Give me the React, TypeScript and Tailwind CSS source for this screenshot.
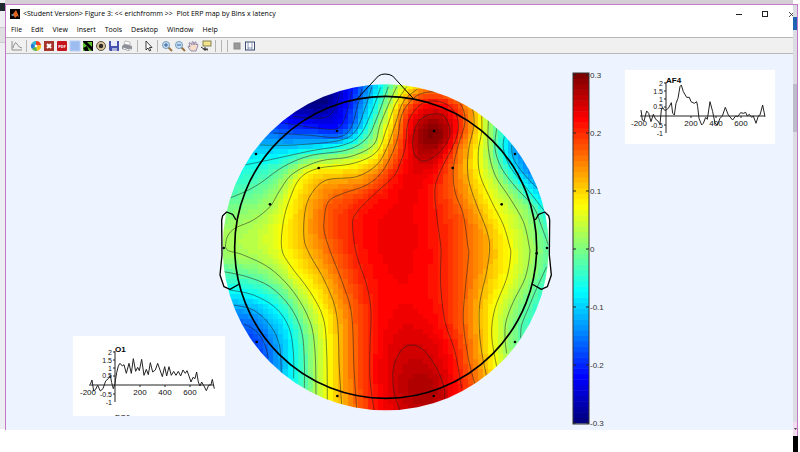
import React from 'react';

type Point = [number, number];

interface Contour {
    level: number;
    points: Point[];
}

// Head map coordinates: three units per screen pixel
const CENTER_X = 497;
const CENTER_Y = 532;
const HEAD_RADIUS = 453;
const MAP_RADIUS = 489;
const CELL = 15;

const contours: Contour[] = [
    { level: 0.25, points: [[630, 133], [665, 133], [685, 160], [688, 200], [660, 245], [615, 273], [585, 255], [578, 210], [595, 155], [630, 133]] },
    { level: 0.245, points: [[540, 1020], [522, 965], [520, 895], [545, 840], [575, 825], [610, 840], [650, 895], [673, 955], [673, 987]] },
    { level: 0.205, points: [[462, 1020], [450, 925], [450, 825], [453, 725], [440, 645], [410, 555], [398, 475], [405, 435], [450, 385], [510, 330], [530, 305], [555, 235], [565, 155], [600, 105], [645, 93], [690, 110], [715, 155], [705, 215], [665, 295], [645, 355], [650, 435], [662, 525], [663, 555], [662, 645], [675, 755], [705, 845], [725, 955]] },
    { level: 0.162, points: [[410, 1015], [402, 895], [395, 735], [370, 645], [335, 555], [315, 495], [312, 455], [325, 395], [370, 370], [440, 345], [490, 300], [530, 215], [545, 135], [580, 85], [620, 67], [670, 70], [720, 100], [735, 155], [715, 225], [700, 295], [705, 365], [730, 435], [743, 525], [746, 555], [735, 665], [730, 755], [745, 865], [764, 940]] },
    { level: 0.116, points: [[365, 1005], [358, 895], [350, 735], [315, 635], [270, 555], [252, 505], [255, 425], [275, 370], [320, 330], [410, 320], [470, 285], [500, 235], [525, 165], [550, 95], [592, 57]] },
    { level: 0.116, points: [[758, 115], [762, 165], [745, 245], [745, 325], [770, 405], [798, 475], [809, 530], [800, 605], [780, 695], [778, 775], [785, 845], [800, 920]] },
    { level: 0.069, points: [[322, 990], [320, 845], [310, 745], [270, 665], [210, 585], [185, 535], [190, 455], [210, 385], [240, 325], [295, 295], [400, 280], [470, 245], [500, 175], [525, 105], [560, 50]] },
    { level: 0.069, points: [[785, 135], [785, 185], [775, 245], [780, 315], [815, 395], [850, 465], [868, 525], [872, 555], [860, 625], [825, 715], [815, 795], [830, 890]] },
    { level: 0.023, points: [[288, 975], [285, 845], [270, 755], [220, 665], [150, 595], [70, 555], [22, 540], [18, 515], [28, 490], [50, 472], [100, 450], [150, 410], [180, 360], [220, 310], [300, 273], [390, 260], [460, 225], [480, 165], [505, 105], [530, 50]] },
    { level: 0.023, points: [[805, 150], [805, 235], [825, 315], [870, 385], [910, 455], [927, 525], [929, 555], [915, 625], [880, 695], [858, 755], [855, 805], [860, 850]] },
    { level: -0.023, points: [[32, 383], [75, 365], [120, 340], [190, 290], [270, 257], [380, 240], [440, 205], [470, 145], [505, 50]] },
    { level: -0.023, points: [[12, 605], [80, 620], [150, 650], [210, 710], [245, 785], [253, 875], [253, 955]] },
    { level: -0.023, points: [[830, 175], [825, 235], [845, 295], [890, 355], [940, 410], [965, 470], [985, 525]] },
    { level: -0.023, points: [[980, 590], [950, 655], [925, 715], [905, 765], [902, 805]] },
    { level: -0.069, points: [[75, 285], [170, 265], [270, 243], [370, 225], [420, 195], [455, 125], [482, 52]] },
    { level: -0.069, points: [[30, 660], [100, 675], [165, 712], [206, 770], [220, 845], [221, 925]] },
    { level: -0.069, points: [[853, 200], [850, 235], [870, 290], [920, 355], [975, 425]] },
    { level: -0.116, points: [[120, 225], [220, 225], [350, 213], [405, 185], [435, 115], [455, 52]] },
    { level: -0.116, points: [[42, 705], [100, 720], [150, 765], [178, 825], [184, 910]] },
    { level: -0.116, points: [[875, 225], [880, 265], [910, 310], [955, 358]] },
    { level: -0.162, points: [[160, 189], [270, 196], [350, 202], [390, 178], [412, 110], [426, 57]] },
    { level: -0.162, points: [[72, 762], [110, 785], [135, 825], [145, 865]] },
    { level: -0.208, points: [[195, 160], [290, 174], [350, 176], [376, 140], [395, 65]] },
    { level: -0.25, points: [[220, 139], [270, 144], [320, 141], [345, 114], [360, 69]] },
];

// Extrema and flat zones the contour lines do not pin down
const anchors: [number, number, number][] = [
    [642, 180, 0.295], [630, 205, 0.29], [635, 960, 0.268], [530, 520, 0.229], [500, 400, 0.22],
    [325, 100, -0.285], [260, 120, -0.275], [105, 815, -0.178], [885, 250, -0.12],
    [915, 260, -0.15], [60, 500, 0.026], [120, 510, 0.042], [560, 700, 0.224],
    [985, 555, -0.018], [30, 450, 0.01],
];

const electrodes: Point[] = [
    [351, 183], [642, 183], [108, 252], [885, 252], [296, 294], [698, 294], [150, 403], [845, 403],
    [11, 534], [981, 534], [950, 550], [110, 816], [885, 816], [352, 978], [641, 978],
];

const jet = (value: number) => {
    const v = Math.floor(Math.min(0.999, Math.max(0, (value + 0.3) / 0.6)) * 64) / 63;
    const channel = (peak: number) =>
        Math.round(255 * Math.min(1, Math.max(0, 1.5 - Math.abs(4 * v - peak))));
    return `rgb(${channel(3)},${channel(2)},${channel(1)})`;
};

const kernel = (dx: number, dy: number) => {
    const r2 = (dx * dx + dy * dy) / 250000;
    return r2 === 0 ? 0 : r2 * Math.log(r2);
};

// Thin plate spline through the contour points
const fitSurface = () => {
    const samples = [
        ...contours.flatMap(c => c.points.map(([x, y]) => [x, y, c.level])),
        ...anchors,
    ];
    const n = samples.length;
    const size = n + 3;
    const m = Array.from({ length: size }, () => new Array<number>(size + 1).fill(0));
    samples.forEach(([x, y, v], i) => {
        samples.forEach(([sx, sy], j) => {
            m[i][j] = kernel(x - sx, y - sy);
        });
        m[i][i] += 0.003;
        [1, x / 500, y / 500].forEach((term, k) => {
            m[i][n + k] = term;
            m[n + k][i] = term;
        });
        m[i][size] = v;
    });
    for (let col = 0; col < size; col++) {
        let pivot = col;
        for (let row = col + 1; row < size; row++) {
            if (Math.abs(m[row][col]) > Math.abs(m[pivot][col])) pivot = row;
        }
        [m[col], m[pivot]] = [m[pivot], m[col]];
        for (let row = col + 1; row < size; row++) {
            const f = m[row][col] / m[col][col];
            if (f === 0) continue;
            for (let k = col; k <= size; k++) m[row][k] -= f * m[col][k];
        }
    }
    const w = new Array<number>(size).fill(0);
    for (let row = size - 1; row >= 0; row--) {
        let sum = m[row][size];
        for (let k = row + 1; k < size; k++) sum -= m[row][k] * w[k];
        w[row] = sum / m[row][row];
    }
    return (x: number, y: number) => {
        let value = w[n] + (w[n + 1] * x) / 500 + (w[n + 2] * y) / 500;
        for (let i = 0; i < n; i++) value += w[i] * kernel(x - samples[i][0], y - samples[i][1]);
        return value;
    };
};

const buildCells = () => {
    const surface = fitSurface();
    const cells: { x: number; y: number; fill: string }[] = [];
    for (let y = CENTER_Y - MAP_RADIUS; y < CENTER_Y + MAP_RADIUS; y += CELL) {
        for (let x = CENTER_X - MAP_RADIUS; x < CENTER_X + MAP_RADIUS; x += CELL) {
            const cx = x + CELL / 2;
            const cy = y + CELL / 2;
            if (Math.hypot(cx - CENTER_X, cy - CENTER_Y) > MAP_RADIUS + CELL) continue;
            cells.push({ x, y, fill: jet(surface(cx, cy)) });
        }
    }
    return cells;
};

const cells = buildCells();

// Catmull-Rom spline as cubic beziers
const smoothPath = (p: Point[]) => {
    let d = `M${p[0][0]} ${p[0][1]}`;
    for (let i = 0; i < p.length - 1; i++) {
        const a = p[i - 1] ?? p[i];
        const b = p[i];
        const c = p[i + 1];
        const e = p[i + 2] ?? c;
        d += `C${b[0] + (c[0] - a[0]) / 6} ${b[1] + (c[1] - a[1]) / 6} ${c[0] - (e[0] - b[0]) / 6} ${c[1] - (e[1] - b[1]) / 6} ${c[0]} ${c[1]}`;
    }
    return d;
};

const leftEar = 'M48 450L38 433L20 426L8 437L5 450L6 555L0 615L12 650L30 658L58 642';
const rightEar = 'M946 450L956 433L974 426L986 437L989 450L988 555L994 615L982 650L964 658L936 642';

const HeadMap: React.FC = () => (
    <svg viewBox="0 0 996 1035" className="w-[332px] shrink-0 overflow-visible" role="img" aria-label="ERP scalp map">
        <defs>
            <clipPath id="scalp">
                <circle cx={CENTER_X} cy={CENTER_Y} r={MAP_RADIUS} />
            </clipPath>
        </defs>
        <path d={leftEar} fill="white" />
        <path d={rightEar} fill="white" />
        <g clipPath="url(#scalp)">
            <g shapeRendering="crispEdges">
                {cells.map(({ x, y, fill }) => (
                    <rect key={`${x}-${y}`} x={x} y={y} width={CELL} height={CELL} fill={fill} />
                ))}
            </g>
            {contours.map(({ points }, i) => (
                <path key={i} d={smoothPath(points)} fill="none" stroke="#222" strokeOpacity="0.8" strokeWidth="2" />
            ))}
        </g>
        <g fill="none" stroke="black" strokeWidth="4" strokeLinejoin="round">
            <circle cx={CENTER_X} cy={CENTER_Y} r={HEAD_RADIUS} strokeWidth="5" />
            <path d="M410 88L475 18Q483 12 495 12Q508 12 518 18L582 88" strokeWidth="3" />
            <path d={leftEar} />
            <path d={rightEar} />
        </g>
        {electrodes.map(([x, y]) => (
            <circle key={`${x}-${y}`} cx={x} cy={y} r="4" />
        ))}
    </svg>
);

const colorTicks = [0.3, 0.2, 0.1, 0, -0.1, -0.2, -0.3];

const ColorBar: React.FC = () => (
    <svg viewBox="0 0 36 360" className="w-9 shrink-0 font-['Liberation_Sans',Arial,sans-serif]" role="img" aria-label="Color scale">
        {Array.from({ length: 64 }, (_, i) => (
            <rect key={i} x="1" y={3 + ((63 - i) * 350) / 64} width="16" height="6" fill={jet(-0.3 + (0.6 * (i + 0.5)) / 64)} />
        ))}
        <rect x="1" y="3" width="16" height="351" fill="none" stroke="#333" />
        {colorTicks.map((tick, i) => {
            const y = 5 + i * 58;
            return (
                <g key={tick}>
                    <path d={`M1 ${y}h3M14 ${y}h3`} stroke="#222" />
                    <text x="18" y={y + 3} fontSize="8" fill="#333">{tick}</text>
                </g>
            );
        })}
    </svg>
);

interface ErpPlotProps {
    label: string;
    originX: number;
    originY: number;
    trace: string;
    className: string;
    height: number;
    width: number;
    nextLabel?: string;
}

const ErpPlot: React.FC<ErpPlotProps> = ({ label, originX, originY, trace, className, height, width, nextLabel }) => (
    <svg viewBox={`0 0 ${width} ${height}`} className={`shrink-0 bg-white font-['Liberation_Sans',Arial,sans-serif] ${className}`} role="img" aria-label={`${label} waveform`}>
        <g stroke="#222" fill="none">
            <path d={`M${originX - 26} ${originY}h125M${originX} ${originY - 34}v51`} />
            <path d={`M${originX + 25} ${originY}v2M${originX + 50} ${originY}v2M${originX + 75} ${originY}v2`} />
            <path d={`M${originX - 2} ${originY - 33}h2M${originX - 2} ${originY - 25}h2M${originX - 2} ${originY - 17}h2M${originX - 2} ${originY - 9}h2M${originX - 2} ${originY + 9}h2`} />
            <polyline points={trace} transform="scale(0.3333)" strokeWidth="3" strokeLinejoin="round" />
        </g>
        <g fontSize="8" fill="#111">
            <text x={originX} y={originY - 33} fontWeight="bold" fill="black">{label}</text>
            <g textAnchor="end" fontSize="7">
                <text x={originX - 3} y={originY - 30}>2</text>
                <text x={originX - 3} y={originY - 22}>1.5</text>
                <text x={originX - 3} y={originY - 14}>1</text>
                <text x={originX - 3} y={originY - 7}>0.5</text>
                <text x={originX - 3} y={originY + 12}>-0.5</text>
                <text x={originX - 3} y={originY + 20}>-1</text>
            </g>
            <g textAnchor="middle">
                <text x={originX - 27} y={originY + 10}>-200</text>
                <text x={originX + 25} y={originY + 10}>200</text>
                <text x={originX + 50} y={originY + 10}>400</text>
                <text x={originX + 75} y={originY + 10}>600</text>
            </g>
            {nextLabel && <text x={originX} y={height + 4} fill="black">{nextLabel}</text>}
        </g>
    </svg>
);

const af4Trace = '48,120 52,150 57,153 65,123 71,130 78,155 85,133 92,148 98,152 105,163 109,120 113,113 120,122 130,115 139,98 143,130 148,135 153,100 159,85 165,50 169,45 175,65 185,82 193,82 198,95 208,100 215,95 218,110 222,145 230,165 235,160 242,142 247,148 255,95 263,125 270,160 277,165 285,145 292,138 301,112 310,135 323,150 332,138 338,140 347,128 355,130 362,127 367,138 373,133 380,142 385,138 393,160 400,138 405,135 413,105 420,140';
const o1Trace = '52,145 57,132 62,165 68,160 74,148 82,165 90,158 98,135 106,128 112,118 116,140 121,158 126,142 131,110 136,90 141,82 148,90 153,86 160,112 168,82 175,112 181,68 188,106 194,94 199,104 206,70 213,118 220,100 226,116 232,80 239,108 247,102 254,82 261,102 268,122 275,92 281,120 288,92 295,118 302,106 309,118 316,106 323,120 330,102 337,112 342,104 348,120 354,138 360,124 366,128 371,108 376,138 381,150 386,138 393,150 400,164 407,148 414,146 418,130 424,158';

const menuItems = ['File', 'Edit', 'View', 'Insert', 'Tools', 'Desktop', 'Window', 'Help'];

const magnifier = (
    <>
        <path d="M7 7l4 4" stroke="#9a7544" strokeWidth="2" />
        <circle cx="5" cy="5" r="3.5" fill="#c5e3f7" stroke="#7899b8" />
    </>
);

const toolGroups: { name: string; icon: React.ReactNode }[][] = [
    [
        { name: 'Plot', icon: <path d="M1 1v9h10M2 8q2-8 4-4t5 4" fill="none" stroke="#777" strokeWidth="0.8" /> },
    ],
    [
        {
            name: 'Colormap',
            icon: (
                <>
                    <path d="M6 6V1a5 5 0 0 1 5 4z" fill="#ef3b24" />
                    <path d="M6 6l5-1a5 5 0 0 1-4 6z" fill="#f6c315" />
                    <path d="M6 6l1 5a5 5 0 0 1-5-2z" fill="#58b647" />
                    <path d="M6 6l-4 3a5 5 0 0 1 0-6z" fill="#217bd2" />
                    <path d="M6 6L2 3a5 5 0 0 1 4-2z" fill="#27b5d8" />
                    <circle cx="6" cy="6" r="1.3" fill="#fff" />
                </>
            ),
        },
        {
            name: 'Close all',
            icon: (
                <>
                    <rect x="1" y="1" width="10" height="10" fill="#a5352b" />
                    <path d="M4 4l4 4M8 4l-4 4" stroke="white" strokeWidth="2" />
                </>
            ),
        },
        {
            name: 'Export PDF',
            icon: (
                <>
                    <rect x="1" y="1" width="10" height="10" rx="1" fill="#c4151c" />
                    <text x="6" y="8" fontSize="4" fontWeight="bold" textAnchor="middle" fill="white">PDF</text>
                </>
            ),
        },
        { name: 'Background', icon: <rect x="1" y="1" width="10" height="10" fill="#9dbdf0" stroke="#b8cff5" /> },
        {
            name: 'Contrast',
            icon: (
                <>
                    <rect x="1" y="1" width="10" height="10" fill="black" />
                    <path d="M1 2l9 9H1z" fill="#5cc12c" />
                    <path d="M5 2h5v5z" fill="#5cc12c" />
                    <path d="M1 8l4-2 2 5H3z" fill="black" />
                </>
            ),
        },
        {
            name: 'Target',
            icon: (
                <>
                    <circle cx="6" cy="6" r="4.5" fill="#d6c49a" stroke="#5b5347" />
                    <circle cx="6" cy="6" r="2.2" fill="#2e2922" />
                </>
            ),
        },
        {
            name: 'Save',
            icon: (
                <>
                    <path d="M1 1h10v10H2L1 10z" fill="#4650ad" />
                    <path d="M3 1h6v5H3z" fill="#e9edfb" />
                    <path d="M4 8h5v3H4z" fill="#aab1d8" />
                </>
            ),
        },
        {
            name: 'Print',
            icon: (
                <>
                    <path d="M3 5l1-4 5 1v3z" fill="white" stroke="#999" strokeWidth="0.6" />
                    <path d="M1 6l3-2 7 2v3l-3 2-7-2z" fill="#8d9096" />
                    <path d="M2 8l6 2 2-1" fill="none" stroke="#eee" />
                </>
            ),
        },
    ],
    [
        { name: 'Pointer', icon: <path d="M4 1v9l2-2 1.5 3 1.3-.6L7.4 7.5H10z" fill="white" stroke="#111" strokeWidth="0.8" /> },
    ],
    [
        { name: 'Zoom in', icon: <>{magnifier}<path d="M3 5h4M5 3v4" stroke="#315a9c" /></> },
        { name: 'Zoom out', icon: <>{magnifier}<path d="M3 5h4" stroke="#315a9c" /></> },
        { name: 'Pan', icon: <path d="M4 11L1 7q0-1 1-1l1 1-1-4q1-1 1.5 0L5 5V2q1-1 1.5 0L7 5l1-3q1-.5 1.2.5L9 5l1-1q1 0 1 1l-2 6z" fill="#f5ddc9" stroke="#7d7aa8" strokeWidth="0.8" /> },
        {
            name: 'Data cursor',
            icon: (
                <>
                    <rect x="3" y="1" width="8" height="5" fill="#f1e38b" stroke="#6e6a3a" strokeWidth="0.8" />
                    <path d="M1 7q3 3 7 3M5 7v4M3 9h5" fill="none" stroke="#333" />
                </>
            ),
        },
    ],
    [
        { name: 'Hide plot tools', icon: <rect x="3" y="3" width="6" height="6" fill="#999" stroke="#888" /> },
        {
            name: 'Show plot tools',
            icon: (
                <>
                    <rect x="1.5" y="2" width="9" height="8" fill="white" stroke="#3b4c70" />
                    <path d="M4 2v8M8 2v8M4 8h4" stroke="#6b7da3" strokeWidth="0.8" />
                </>
            ),
        },
    ],
];

const TitleBar: React.FC = () => (
    <header className="flex h-[18px] items-center">
        <svg viewBox="0 0 10 10" className="ml-1 size-[10px] bg-black" aria-hidden="true">
            <path d="M1 6l2-1 3-4 1 2 2 5-2-1-2 2-1-2z" fill="#e2641f" />
            <path d="M1 6l2-1 1 1-1 1z" fill="#4da3c9" />
        </svg>
        <h1 className="ml-[3px] flex-1 whitespace-pre text-[7px] leading-3 text-black">
            {'<Student Version> Figure 3: << erichfromm >>  Plot ERP map by Bins x latency'}
        </h1>
        <div className="-mr-[3px] flex gap-4">
            <button aria-label="Minimize" className="flex size-[10px] items-center justify-center">
                <svg viewBox="0 0 8 8" className="size-2"><path d="M1 4.5h6" stroke="#222" /></svg>
            </button>
            <button aria-label="Maximize" className="flex size-[10px] items-center justify-center">
                <svg viewBox="0 0 8 8" className="size-2"><rect x="1.5" y="1.5" width="5" height="5" fill="none" stroke="#222" /></svg>
            </button>
            <button aria-label="Close" className="flex size-[10px] items-center justify-center">
                <svg viewBox="0 0 8 8" className="size-2"><path d="M2 2l5 5M7 2L2 7" stroke="#222" strokeWidth="0.8" /></svg>
            </button>
        </div>
    </header>
);

const MenuBar: React.FC = () => (
    <nav className="flex h-[14px] items-center gap-[9px] pl-[5px]">
        {menuItems.map(item => (
            <button key={item} className="text-[7px] leading-3 text-black">{item}</button>
        ))}
    </nav>
);

const Toolbar: React.FC = () => (
    <div className="flex h-[17px] items-center gap-px border-y border-[#b8b8b8] bg-[#f0f0f0] pl-[5px]">
        {toolGroups.map((group, index) => (
            <React.Fragment key={index}>
                {index > 0 && <span className={`${index === 2 ? 'mx-[3px]' : 'mx-[2px]'} h-3 w-px bg-[#b5b5b5]`} />}
                {index === 4 && (
                    <>
                        <span className="mx-[2px] h-3 w-px bg-[#b5b5b5]" />
                        <span className="mx-[2px] h-3 w-px bg-[#b5b5b5]" />
                    </>
                )}
                {group.map(({ name, icon }) => (
                    <button key={name} aria-label={name} title={name} className="w-[12px]">
                        <svg viewBox="0 0 12 12" className="size-3">{icon}</svg>
                    </button>
                ))}
            </React.Fragment>
        ))}
    </div>
);

const App: React.FC = () => (
    <div className="flex min-h-screen items-start bg-white font-['Open_Sans','Noto_Sans',sans-serif]">
        <div className="h-[429px] w-[5px] shrink-0 bg-[#eceef2] pt-[3px]">
            <div className="h-2 w-[5px] bg-[#1d2a30]" />
            <div className="mt-4 h-4 border-y border-[#ccc] bg-[#dfdfe2]" />
        </div>

        <main className="min-w-0 flex-1">
            <div className="h-1 bg-[#d3cfd5]" />
            <div className="overflow-hidden border-t border-l border-[#c678c8] bg-white">
                <TitleBar />
                <MenuBar />
                <Toolbar />
                <section className="flex items-start bg-[#edf4ff]">
                    <ErpPlot label="O1" originX={42} originY={49} trace={o1Trace} width={152} height={80} nextLabel="FC6" className="mt-[282px] ml-[67px] w-[152px]" />
                    <div className="-ml-[5px] mt-4">
                        <HeadMap />
                    </div>
                    <div className="mt-4 ml-5">
                        <ColorBar />
                    </div>
                    <ErpPlot label="AF4" originX={41} originY={46} trace={af4Trace} width={150} height={74} className="mt-4 ml-[17px] w-[150px]" />
                </section>
            </div>
        </main>

        <aside className="w-[7px] shrink-0 pt-1">
            <div className="w-[5px] border-t border-r border-[#c678c8] bg-[#dcdce3]">
                <div className="h-3" />
                <div className="h-[13px] bg-[#1f62b4]" />
                <div className="mt-[54px] h-12 bg-[#bcbccb]" />
                <div className="mt-[290px] h-[14px] bg-[#f3dcf0]">
                    <svg viewBox="0 0 4 12" className="h-3 w-1" aria-hidden="true"><path d="M1 6h3L2.5 8z" fill="#444" /></svg>
                </div>
            </div>
            <div className="h-4 w-[5px] bg-black" />
        </aside>
    </div>
);

export default App;
